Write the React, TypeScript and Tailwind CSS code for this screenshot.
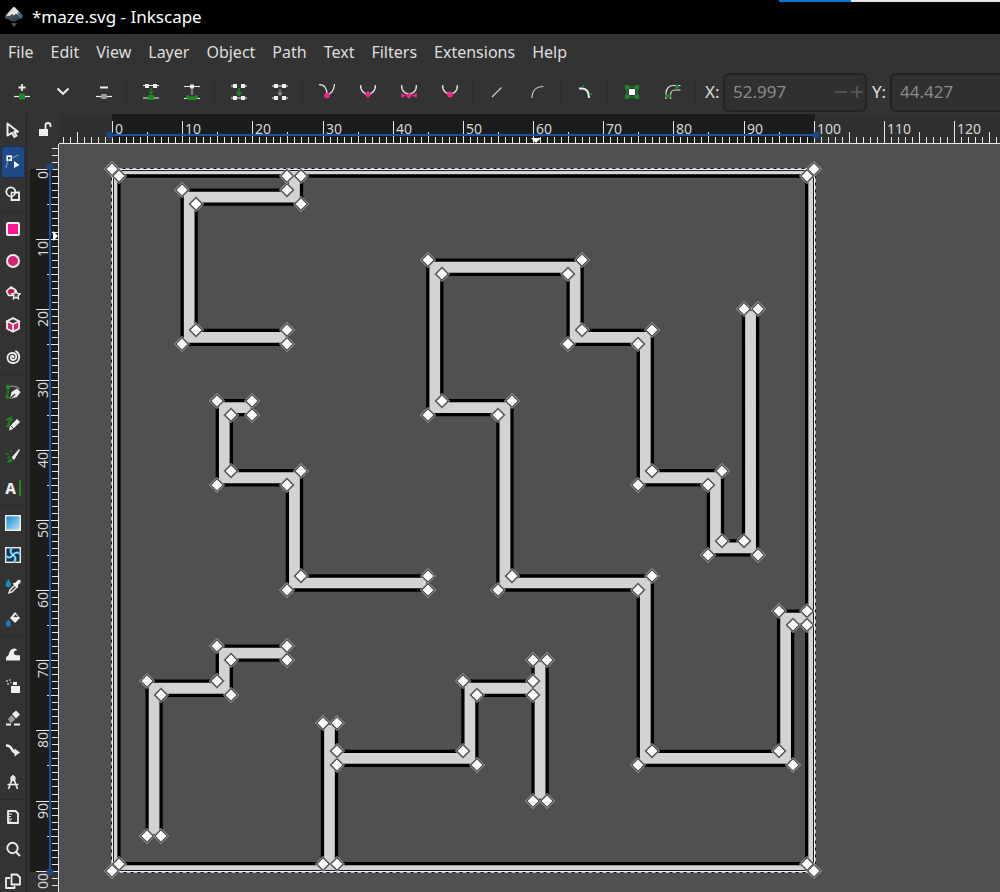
import { useState } from 'react'
import type { ReactNode } from 'react'

type Point = [number, number]

interface Tool {
  name: string
  icon: ReactNode
}

const SCALE = 7.017
const GREEN = '#1d8a22'
const PINK = '#f0288c'
const BLUE = '#3aa8e0'
const FG = '#eeeeee'

const MENUS = ['File', 'Edit', 'View', 'Layer', 'Object', 'Path', 'Text', 'Filters', 'Extensions', 'Help']

// maze walls in document units
const OUTER: Point[] = [[0, 0], [100, 0], [100, 100], [0, 100]]

const INNER: Point[] = [
  [1, 1], [25, 1], [25, 3], [10, 3], [10, 25], [25, 25], [25, 23], [12, 23], [12, 5], [27, 5], [27, 1],
  [99, 1], [99, 63], [95, 63], [95, 83], [77, 83], [77, 58], [57, 58], [57, 33], [47, 33], [47, 15],
  [65, 15], [65, 25], [75, 25], [75, 45], [85, 45], [85, 55], [92, 55], [92, 20], [90, 20], [90, 53],
  [87, 53], [87, 43], [77, 43], [77, 23], [67, 23], [67, 13], [45, 13], [45, 35], [55, 35], [55, 60],
  [75, 60], [75, 85], [97, 85], [97, 65], [99, 65], [99, 99],
  [32, 99], [32, 85], [52, 85], [52, 75], [60, 75], [60, 90], [62, 90], [62, 70], [60, 70], [60, 73],
  [50, 73], [50, 83], [32, 83], [32, 79], [30, 79], [30, 99], [1, 99]
]

const ISLANDS: Point[][] = [
  [[15, 33], [20, 33], [20, 35], [17, 35], [17, 43], [27, 43], [27, 58], [45, 58], [45, 60], [25, 60], [25, 45], [15, 45]],
  [[5, 73], [15, 73], [15, 68], [25, 68], [25, 70], [17, 70], [17, 75], [7, 75], [7, 95], [5, 95]]
]

const toPath = (points: Point[]) =>
  'M' + points.map(([x, y]) => `${(x * SCALE).toFixed(1)} ${(y * SCALE).toFixed(1)}`).join('L') + 'Z'

function Icon({ children }: { children: ReactNode }) {
  return (
    <svg className="size-4 shrink-0" viewBox="0 0 16 16" fill="none" aria-hidden="true">
      {children}
    </svg>
  )
}

const NODE_TOOLS: Tool[][] = [
  [
    {
      name: 'Insert node',
      icon: <Icon><path d="M8 0v7M4.5 3.5h7" stroke={FG} strokeWidth="1.8" /><path d="M0 12.5h16" stroke={FG} strokeWidth="1.2" /><rect x="5" y="9.5" width="6" height="6" rx="1" fill={GREEN} /></Icon>
    },
    {
      name: 'Insert options',
      icon: <Icon><path d="M2.5 4.5 8 9.8l5.5-5.3" stroke={FG} strokeWidth="2" /></Icon>
    },
    {
      name: 'Delete node',
      icon: <Icon><path d="M4 3.5h8" stroke={FG} strokeWidth="2" /><path d="M0 12.5h16" stroke={FG} strokeWidth="1.2" /><rect x="5" y="10" width="6" height="5" rx="1" fill="#999" /></Icon>
    }
  ],
  [
    {
      name: 'Join nodes',
      icon: <Icon><path d="M0 1.500h16M0 14h16" stroke={FG} strokeWidth="1.2" /><path d="M2 0h4v4H2zM10 0h4v4h-4z" fill={FG} /><path d="M8 4v6M6 7.500l2 2.500 2-2.500" stroke={GREEN} strokeWidth="1.2" /><path d="M5 11h6v5H5z" fill={GREEN} /></Icon>
    },
    {
      name: 'Break path',
      icon: <Icon><path d="M0 2.500h16M0 14.500h16" stroke={FG} strokeWidth="1.2" /><path d="M6 .5h4v4H6z" fill={FG} /><path d="M8 4v7" stroke="#999" strokeWidth="1.5" /><path d="m1.500 13 2.500-2.500L6.500 13 8 11.500 9.500 13l2.500-2.500 2.500 2.500-2.500 3H4z" fill={GREEN} /></Icon>
    }
  ],
  [
    {
      name: 'Join with segment',
      icon: <Icon><path d="M0 2h4M12 2h4M0 14h16" stroke={FG} strokeWidth="1.2" /><path d="M2 0h4v4H2zM10 0h4v4h-4zM2 12h4v4H2zM10 12h4v4h-4z" fill={FG} /><path d="M8 4v7M5.5 8 8 11l2.500-3" stroke={GREEN} strokeWidth="1.5" /></Icon>
    },
    {
      name: 'Delete segment',
      icon: <Icon><path d="M0 2h16M0 14h4M12 14h4" stroke={FG} strokeWidth="1.2" /><path d="M2 0h4v4H2zM10 0h4v4h-4zM2 12h4v4H2zM10 12h4v4h-4z" fill={FG} /><path d="M8 5v6M6 8.500 8 11l2-2.500" stroke="#999" strokeWidth="1.2" /></Icon>
    }
  ],
  [
    {
      name: 'Make corner',
      icon: <Icon><path d="M0 .5c6 0 8 4.500 8 10.500 4-1 7-5 7.500-11" stroke="#ddd" strokeWidth="1.3" /><circle cx="8" cy="11.500" r="2.800" fill={PINK} /></Icon>
    },
    {
      name: 'Make smooth',
      icon: <Icon><path d="M.5 1C.5 7 4 10 8 10s7.500-3 7.500-9" stroke="#ddd" strokeWidth="1.5" /><path d="m8 7 3.500 3.500L8 14l-3.500-3.500z" fill={PINK} /></Icon>
    },
    {
      name: 'Make symmetric',
      icon: <Icon><path d="M.5 1C.5 7 4 10 8 10s7.500-3 7.500-9" stroke="#ddd" strokeWidth="1.5" /><path d="m8 8.500 3 3-3 3-3-3zM.5 9.500 4.500 11.500l-4 2zM15.500 9.500l-4 2 4 2z" fill={PINK} stroke={PINK} strokeWidth=".5" /></Icon>
    },
    {
      name: 'Make auto-smooth',
      icon: <Icon><path d="M.5 1C.5 7 4 10 8 10s7.500-3 7.500-9" stroke="#ddd" strokeWidth="1.5" /><circle cx="8" cy="10.500" r="3" fill={PINK} /></Icon>
    }
  ],
  [
    { name: 'Make line', icon: <Icon><path d="m3 13 9.500-9.500" stroke="#ccc" strokeWidth="1.2" /></Icon> },
    { name: 'Make curve', icon: <Icon><path d="M2 14C2 7 6 2.500 13.500 2.500" stroke="#ccc" strokeWidth="1.2" /></Icon> }
  ],
  [
    {
      name: 'Add corners',
      icon: <Icon><path d="M2 4.500h3c4 0 7 2.500 7 9.500" stroke={FG} strokeWidth="2" /><path d="M5.500 1 7 3M12.500 10H15" stroke={GREEN} strokeWidth="1.5" /></Icon>
    }
  ],
  [
    {
      name: 'Object to path',
      icon: <Icon><rect x="3" y="3" width="10" height="10" stroke={GREEN} strokeWidth="1.2" /><path d="M1 1h4v4H1zM11 1h4v4h-4zM1 11h4v4H1zM11 11h4v4h-4z" fill={GREEN} /><path d="M5 5h6v6H5z" fill="#fff" /></Icon>
    },
    {
      name: 'Stroke to path',
      icon: <Icon><path d="M1 15V9c0-4 3-7.500 7-7.500h7.500M5.500 15v-4c0-3 2-5 4.500-5h5.500" stroke="#ddd" strokeWidth="1.2" /><path d="M9.500 2.500 12 0l2.500 2.500L12 6zM0 10.500h6.500v3H0z" fill={GREEN} /></Icon>
    }
  ]
]

const TOOLBOX: Tool[][] = [
  [
    {
      name: 'Selector',
      icon: <Icon><path d="m2.500 1.500 10.500 8.200H9.200l2.300 4-2.200 1.200L7 10.800l-4.500 2.700z" stroke={FG} strokeWidth="2" strokeLinejoin="round" /></Icon>
    },
    {
      name: 'Node tool',
      icon: <Icon><rect x="2.2" y="2.2" width="4" height="4" stroke="#fff" strokeWidth="1.6" /><path d="M6 4c3-.8 5-1.800 7.500-3M3.500 6C2 9 1.500 11 1 14" stroke="#8fa8cf" /><path d="m9 7 5.500 4L9 14z" fill="#fff" /></Icon>
    },
    {
      name: 'Shape builder',
      icon: <Icon><circle cx="5.8" cy="5.8" r="4.5" stroke={FG} strokeWidth="1.8" /><path d="M11 6.500h3V14H6.500v-3.500" stroke={FG} strokeWidth="1.8" /><path d="M6.500 9.500v-3h4" stroke={FG} strokeWidth="1.5" /></Icon>
    }
  ],
  [
    {
      name: 'Rectangle',
      icon: <Icon><rect x="2" y="2" width="12" height="12" rx="1" fill="#ff1493" stroke={FG} strokeWidth="2" /></Icon>
    },
    {
      name: 'Ellipse',
      icon: <Icon><circle cx="8" cy="8" r="6" fill="#d62478" stroke={FG} strokeWidth="2" /></Icon>
    },
    {
      name: 'Star',
      icon: <Icon><path d="m6 2 4.500 3-1.300 5.500H3.500L1.500 6z" fill="#c2185b" stroke={FG} strokeWidth="1.6" strokeLinejoin="round" /><path d="m11 5.800 1.300 2.600 2.800.4-2 2 .4 2.900-2.500-1.300-2.600 1.300.5-2.900-2-2 2.800-.4z" fill="#444" stroke={FG} strokeWidth="1.4" /></Icon>
    },
    {
      name: '3D box',
      icon: <Icon><path d="m8 1.200 6 3v7.600l-6 3-6-3V4.200z" fill="#d62478" stroke={FG} strokeWidth="1.8" strokeLinejoin="round" /><path d="m2 4.200 6 3 6-3-6-3z" fill="#333" stroke={FG} strokeWidth="1.6" /><path d="M8 7v7.500" stroke={FG} strokeWidth="1.8" /></Icon>
    },
    {
      name: 'Spiral',
      icon: <Icon><path d="M8 8.500c.8 0 .8-1.800-.7-1.700C5 7 5 11 8.200 11c4 0 4.200-6.800-.7-7C.8 3.700.5 13.800 8 14c6.500.2 8.500-8 3-11.800" stroke={FG} strokeWidth="1.8" strokeLinecap="round" /></Icon>
    }
  ],
  [
    {
      name: 'Pen',
      icon: <Icon><path d="M1 1h4v4H1zM1.500 9 5 14.500H.5z" fill={GREEN} /><path d="M5 2.500c4-1 7 0 9.500 2.500" stroke="#8a8a8a" strokeWidth="1.2" /><path d="M3 5v5" stroke={GREEN} strokeWidth="1.5" /><path d="m5 15 1.500-7L12 4.500l3.500 3.500-3.500 5z" fill={FG} /><path d="m5.500 14.500 4.500-4.500" stroke="#333" strokeWidth="1.3" /></Icon>
    },
    {
      name: 'Pencil',
      icon: <Icon><path d="m1 4 5-2.500L4 6l4.500-3M1.500 11 4 7.500v3" stroke={GREEN} strokeWidth="1.5" /><path d="m4 14.500 1-4.500 7-7 3 3-7 7z" fill={FG} /><path d="m5.500 9.500 3.500 3.500" stroke="#333" /></Icon>
    },
    {
      name: 'Calligraphy',
      icon: <Icon><path d="M1 6h3M5 3h2M2 10.500l3-2" stroke={GREEN} strokeWidth="1.5" /><path d="M1.500 14c2 0 1.500-3.500 5-3.500L8 12c-1 2.500-4.500 2.800-6.500 2z" fill={GREEN} /><path d="m7.500 9.500 7-8L9 11z" fill={FG} stroke={FG} strokeWidth="1.3" /></Icon>
    },
    {
      name: 'Text',
      icon: (
        <span className="flex items-center gap-[3px] text-[15px] leading-4 font-extrabold text-[#eeeeee]">
          A<i className="h-4 w-0.5 bg-[#1d8a22]" />
        </span>
      )
    }
  ],
  [
    {
      name: 'Gradient',
      icon: (
        <Icon>
          <defs><linearGradient id="fade" x1="0" y1="0" x2="1" y2="1"><stop offset="0" stopColor="#0b86cc" /><stop offset="1" stopColor="#c4e6f6" /></linearGradient></defs>
          <rect x=".7" y=".7" width="14.6" height="14.6" fill="url(#fade)" stroke={FG} strokeWidth="1.4" />
        </Icon>
      )
    },
    {
      name: 'Mesh',
      icon: <Icon><rect x=".7" y=".7" width="14.6" height="14.6" fill="#17394d" stroke={FG} strokeWidth="1.4" /><path d="M8 8C5 6 5 3 7 1M8 8c2-3 5-3 7-1M8 8c3 2 3 5 1 7M8 8c-2 3-5 3-7 1" stroke={BLUE} strokeWidth="2.5" /><path d="M8 8C5 6 5 3 7 1M8 8c2-3 5-3 7-1M8 8c3 2 3 5 1 7M8 8c-2 3-5 3-7 1" stroke="#d8eef8" strokeWidth="1" /></Icon>
    },
    {
      name: 'Dropper',
      icon: <Icon><path d="M3.300 0c2 3 2.700 4 2.700 5.500a2.700 2.700 0 0 1-5.400 0C.6 4 1.500 3 3.300 0z" fill="#168cc4" /><path d="m4 14 1-3 5-5 2 2-5 5z" stroke={FG} strokeWidth="1.4" /><path d="m9 4 1.500-.5L13 1c2-1 3.500 1 2.500 2.500L13 6v2l-1 1-4.500-4.500z" fill={FG} /></Icon>
    },
    {
      name: 'Paint bucket',
      icon: <Icon><path d="M3.500 8C5 10.500 6 11.500 6 13a2.700 2.700 0 0 1-5.400 0C.6 11.500 2 10.500 3.500 8z" fill="#1b78c0" /><path d="m5 7 5-6 5 6-5 5z" fill={FG} /><path d="M8.500 6h4.500l-2.500-2.500z" fill="#333" /></Icon>
    }
  ],
  [
    {
      name: 'Tweak',
      icon: <Icon><path d="M1 14.500V11c3-1 3-4 4-6 2-3 6-3.500 7-.5-2-.5-3.500.5-3 3s4 1.500 6 2v5z" fill={FG} /></Icon>
    },
    {
      name: 'Spray',
      icon: <Icon><path d="M6 8h9v7H6zM8 4h4v3H8z" fill={FG} /><path d="M1 2h2v2H1zM4 1h1.500v2H4zM2 5h2v2H2zM5 4h1.500v1.500H5z" fill="#999" /></Icon>
    },
    {
      name: 'Eraser',
      icon: <Icon><path d="m7 4 4-3.500 4 4L11 8.500z" fill={FG} /><path d="m6.500 5 3.800 4L7 12.500H5L3 9z" fill="#999" /><path d="M1 14.500h5M9 14.500h6" stroke={FG} strokeWidth="2" /></Icon>
    },
    {
      name: 'Connector',
      icon: <Icon><path d="M1 3.500c7-.5 5 7.500 10 7" stroke={FG} strokeWidth="2.5" /><path d="m9.500 6.500 5.500 4-5.500 4z" fill={FG} /></Icon>
    },
    {
      name: 'Path effects',
      icon: <Icon><path d="M8 1v3M7.500 4 3.500 15M8.500 4l4 11M2.500 10.500h11" stroke={FG} strokeWidth="1.6" /><circle cx="8" cy="4.500" r="2" stroke={FG} strokeWidth="1.4" /></Icon>
    }
  ],
  [
    {
      name: 'Measure',
      icon: <Icon><path d="M3 2h7.500L13 4.500V14H3z" stroke={FG} strokeWidth="1.8" strokeLinejoin="round" /><path d="M3 5h4M3 7.500h3M3 10h4M3 12h3" stroke={FG} /></Icon>
    },
    {
      name: 'Zoom',
      icon: <Icon><circle cx="7.5" cy="7" r="5.2" stroke={FG} strokeWidth="1.9" /><path d="m11 11 4 4" stroke={FG} strokeWidth="2" /></Icon>
    },
    {
      name: 'Pages',
      icon: <Icon><path d="M6.500 1.500H12l3 3v7H6.500zM5 5H1v10h8.500v-2" stroke={FG} strokeWidth="1.8" strokeLinejoin="round" /></Icon>
    }
  ]
]

const range = (from: number, to: number) => Array.from({ length: to - from + 1 }, (_, i) => from + i)

// tick length depends on the unit: 10s, 5s, then single units
const tickLength = (u: number) => (u % 10 === 0 ? 22 : u % 5 === 0 ? 11 : 6)

function HorizontalRuler() {
  return (
    <svg className="h-[30px] min-w-0 flex-1 bg-[#303030]" aria-hidden="true">
      <rect x="53" width="703" height="30" fill="#1c1c1c" />
      {range(-7, 140).map(u => {
        const x = Math.round(53 + u * SCALE) + 0.5
        return <path key={u} d={`M${x} 29v${-tickLength(u)}`} stroke="#e8e8e8" />
      })}
      <path d="M51 21h707" stroke="#1c53a0" strokeWidth="2" />
      <circle cx="51" cy="21" r="3.5" fill="#1c4785" />
      <circle cx="757" cy="21" r="3.5" fill="#1c4785" />
      {range(0, 12).map(n => (
        <text key={n} x={Math.round(56 + n * 10 * SCALE)} y="20" fontSize="14" fill="#d6d6d6">{n * 10}</text>
      ))}
      <path d="M0 29.500h3000" stroke="#e8e8e8" />
      <path d="M472 24h10l-5 5z" fill="#fff" />
    </svg>
  )
}

function VerticalRuler() {
  return (
    <svg className="w-8 shrink-0" aria-hidden="true">
      <rect x="3" y="25" width="29" height="703" fill="#1c1c1c" />
      {range(-3, 140).map(u => {
        const y = Math.round(25 + u * SCALE) + 0.5
        return <path key={u} d={`M31 ${y}h${-tickLength(u)}`} stroke="#e8e8e8" />
      })}
      <path d="M23 24v704" stroke="#1c53a0" strokeWidth="2" />
      <circle cx="23" cy="23" r="3.5" fill="#1c4785" />
      <circle cx="23" cy="728" r="3.5" fill="#1c4785" />
      {range(0, 10).map(n => (
        <text
          key={n}
          transform={`translate(21 ${Math.round(27 + n * 10 * SCALE)}) rotate(-90)`}
          textAnchor="end"
          fontSize="14"
          fill="#d6d6d6"
        >
          {n * 10}
        </text>
      ))}
      <path d="M31.500 0v3000" stroke="#e8e8e8" />
      <path d="M26 87v10l5-5z" fill="#fff" />
    </svg>
  )
}

function Maze() {
  const size = 702
  const nodes = [...OUTER, ...INNER, ...ISLANDS.flat()]

  return (
    <svg className="block h-full w-full" role="img" aria-label="Maze drawing">
      <g transform="translate(53 25)">
        <path d={toPath(OUTER) + toPath(INNER)} fill="#d3d3d3" fillRule="evenodd" />
        <path d={toPath(INNER)} stroke="#000" strokeWidth="3.3" fill="none" />
        {ISLANDS.map((island, i) => (
          <path key={i} d={toPath(island)} fill="#d3d3d3" stroke="#000" strokeWidth="3.3" />
        ))}
        <rect x=".5" y=".5" width={size} height={size} fill="none" stroke="#f4f4f4" />
        <rect x="1.5" y="1.5" width={size - 2} height={size - 2} fill="none" stroke="#1a1a1a" />
        {/* selection outline */}
        <rect x="-.5" y="-.5" width={size + 2} height={size + 2} fill="none" stroke="#10102c" />
        <rect x="-.5" y="-.5" width={size + 2} height={size + 2} fill="none" stroke="#b4b4d0" strokeDasharray="4 3" />
        {nodes.map(([x, y], i) => (
          <g key={i} transform={`translate(${Math.round(x * SCALE)} ${Math.round(y * SCALE)})`}>
            <path d="M0-8 8 0 0 8-8 0z" fill="#a8a8a8" />
            <path d="M0-7 7 0 0 7-7 0z" fill="#3c3c3c" />
            <path d="M0-5.500 5.500 0 0 5.500-5.500 0z" fill="#fff" />
          </g>
        ))}
      </g>
    </svg>
  )
}

function CoordinateField({ id, label, value }: { id: string; label: string; value: string }) {
  return (
    <div className="flex shrink-0 items-center">
      <label htmlFor={id} className="w-[18px] text-[17px] text-[#dedede]">{label}</label>
      <div className="flex h-[39px] w-36 items-center rounded-md border-2 border-[#232323] bg-[#303030]">
        <input id={id} defaultValue={value} disabled className="w-0 flex-1 pl-2 text-[17px] text-[#8a8a8a]" />
        <button type="button" disabled aria-label={`Decrease ${label}`} className="flex w-4 justify-center">
          <svg className="size-3" viewBox="0 0 12 12"><path d="M0 6h12" stroke="#5c5c5c" strokeWidth="1.5" /></svg>
        </button>
        <button type="button" disabled aria-label={`Increase ${label}`} className="flex w-4 justify-center">
          <svg className="size-3" viewBox="0 0 12 12"><path d="M0 6h12M6 0v12" stroke="#5c5c5c" strokeWidth="1.5" /></svg>
        </button>
      </div>
    </div>
  )
}

export default function App() {
  const [activeTool, setActiveTool] = useState('Node tool')

  return (
    <div className="flex h-screen flex-col overflow-hidden bg-[#333333] font-['Noto_Sans','Open_Sans',sans-serif] text-[#dedede]">
      <header className="relative flex h-[34px] shrink-0 items-center bg-black pl-1">
        <svg className="h-[22px] w-5" viewBox="0 0 20 22" aria-hidden="true">
          <defs>
            <linearGradient id="ink" x1="0" y1="0" x2="1" y2="1">
              <stop offset="0" stopColor="#666" />
              <stop offset="1" stopColor="#22344e" />
            </linearGradient>
          </defs>
          <path d="M8.500 1.500q1.500-1.500 3 0L19 9.500q1 2-1 3l-5 1.500-1.500 1.500h-4L6 14l-4.500-1.500q-1.500-1.500 0-3z" fill="url(#ink)" />
          <path d="M9 1.500q1-1 2 0L16 7l-2.500 2-1.500-1.500-2 2-2-1.500-2.500 2-3.500-.5z" fill="#e4e4e4" />
          <path d="m14 5.500 4.500 4.500-2.500 2.500-2.500-3z" fill="#4a6c9e" />
          <path d="M7 17h6l-1 2-2 2-2-2z" fill="#4a4a4a" />
        </svg>
        <h1 className="ml-2 text-[17px] text-white">*maze.svg - Inkscape</h1>
        <div className="absolute top-0 right-0 flex h-0.5 w-[221px]">
          <div className="w-[72px] bg-[#0078d7]" />
          <div className="flex-1 bg-[#e6e6e6]" />
        </div>
      </header>

      <nav className="flex h-9 shrink-0 items-center gap-[17px] pl-2" aria-label="Main menu">
        {MENUS.map(menu => (
          <button key={menu} type="button" className="shrink-0 text-base">{menu}</button>
        ))}
      </nav>

      <div className="flex h-11 shrink-0 items-center pl-px" role="toolbar" aria-label="Node controls">
        {NODE_TOOLS.map((group, i) => (
          <div key={i} className="mr-[3px] flex shrink-0 border-r border-[#2e2e2e] pr-[2px]">
            {group.map(tool => (
              <button key={tool.name} type="button" aria-label={tool.name} className="flex h-9 w-[41px] items-center justify-center">
                {tool.icon}
              </button>
            ))}
          </div>
        ))}
        <div className="ml-1.5 flex gap-[5px]">
          <CoordinateField id="x" label="X:" value="52.997" />
          <CoordinateField id="y" label="Y:" value="44.427" />
        </div>
      </div>

      <div className="flex min-h-0 flex-1">
        <aside className="w-[27px] shrink-0 overflow-hidden border-r border-[#252525]" aria-label="Toolbox">
          {TOOLBOX.map((group, i) => (
            <div key={i} className="mb-px border-b border-[#2c2c2c] pb-px">
              {group.map(tool => (
                <button
                  key={tool.name}
                  type="button"
                  aria-label={tool.name}
                  aria-pressed={activeTool === tool.name}
                  onClick={() => setActiveTool(tool.name)}
                  className="ml-px flex h-8 w-6 items-center justify-center rounded-sm border border-transparent aria-pressed:border-[#16305a] aria-pressed:bg-[#1f4a86]"
                >
                  {tool.icon}
                </button>
              ))}
            </div>
          ))}
        </aside>

        <main className="flex min-w-0 flex-1 flex-col">
          <div className="flex shrink-0">
            <button type="button" aria-label="Lock guides" className="flex h-[30px] w-8 shrink-0 items-center justify-center pl-1">
              <Icon>
                <path d="M2 8h9v7H2z" fill={FG} />
                <path d="M8.500 8V4.500a2.500 2.500 0 0 1 5 0V6" stroke={FG} strokeWidth="1.8" />
              </Icon>
            </button>
            <HorizontalRuler />
          </div>
          <div className="flex min-h-0 flex-1">
            <VerticalRuler />
            <div className="min-w-0 flex-1 bg-[#505050]">
              <Maze />
            </div>
          </div>
        </main>
      </div>
    </div>
  )
}
